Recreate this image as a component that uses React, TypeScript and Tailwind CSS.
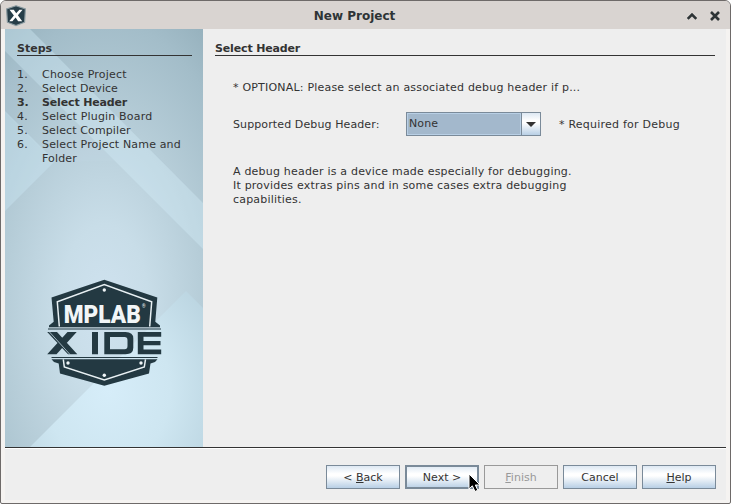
import React from "react";

const steps = [
  { lines: ["Choose Project"], look: "tracking-[0.22px]" },
  { lines: ["Select Device"], look: "tracking-[0.07px]" },
  { lines: ["Select Header"], look: "font-bold tracking-[-0.15px]" },
  { lines: ["Select Plugin Board"], look: "tracking-[0.18px]" },
  { lines: ["Select Compiler"], look: "tracking-[0.12px]" },
  { lines: ["Select Project Name and", "Folder"], look: "tracking-[0.16px]" },
];

function AppIcon() {
  return (
    <svg width="22" height="22" viewBox="0 0 22 22" className="mt-px block">
      <path d="M11 .8 20.400 4 19.600 17.200 11 20.600 2.400 17.200 1.600 4Z" fill="#263d48" stroke="#8b9ba1" strokeWidth="1.200" />
      <path d="M4.500 4.800H8.800L11.200 8.200 14.400 4.800H17.600L12.900 10.300 17.200 16.200H13.100L10.600 12.600 7.400 16.200H4.200L8.900 10.600Z" fill="#fff" />
    </svg>
  );
}

function Backdrop() {
  return (
    <svg width="198" height="418" viewBox="5 29 198 418" className="absolute inset-0">
      <defs>
        <radialGradient id="glow" gradientUnits="userSpaceOnUse" cx="0" cy="0" r="1" gradientTransform="translate(104 310) scale(180 340)">
          <stop offset="0" stopColor="#cfe2ef" />
          <stop offset=".25" stopColor="#c8dde8" />
          <stop offset=".55" stopColor="#b6cdd8" />
          <stop offset=".85" stopColor="#a3bdc9" />
          <stop offset="1" stopColor="#96b1bd" />
        </radialGradient>
        <radialGradient id="corner" gradientUnits="userSpaceOnUse" cx="0" cy="0" r="1" gradientTransform="translate(108 390) scale(125 150)">
          <stop offset="0" stopColor="#d6edf9" />
          <stop offset=".5" stopColor="#cee6f1" />
          <stop offset="1" stopColor="#b9d3df" />
        </radialGradient>
      </defs>
      <rect x="5" y="29" width="198" height="418" fill="url(#glow)" />
      <path d="M5 29H30L203 203V249L5 51Z" fill="#d6f0fc" fillOpacity=".35" />
      <path d="M5 51 115 161 54 162 5 113Z" fill="#d6f0fc" fillOpacity=".06" />
      <path d="M5 111 55 161 5 211Z" fill="#cdeaf6" fillOpacity=".38" />
      <path d="M30 447 186 291 203 308V447Z" fill="url(#corner)" />
    </svg>
  );
}

function Logo() {
  return (
    <svg width="120" height="110" viewBox="45 278 120 110" className="absolute left-[40px] top-[249px]">
      <g fill="#233942">
        <path d="M104.300 279.800 157.300 297.500 155.300 321.700 160 325.500V327H49V325.500L53.700 321.700 51.500 297.500Z" />
        <path d="M51.500 359.300H157.500L155 362 150.500 363.500 149 373.500 104.300 385.800 60 373.500 58.700 363.500 54 362Z" />
      </g>
      <path d="M59.300 326.500 57.300 301.700 104.300 284.500 151.700 301.700 149.700 326.500" fill="none" stroke="#e8f0f3" strokeWidth="1.500" />
      <path d="M63.300 359.300 64.300 367 104.300 380 144.300 367 145.500 359.300" fill="none" stroke="#e8f0f3" strokeWidth="1.500" />
      <g fill="#f0f5f7">
        <circle cx="104.300" cy="290" r="1.700" />
        <circle cx="68" cy="363" r="1.700" />
        <circle cx="141" cy="363" r="1.700" />
        <circle cx="104.300" cy="375.300" r="1.700" />
      </g>
      <path d="M49 327.500H160" stroke="#9fb1ba" strokeWidth="1" />
      <path d="M48 329H161M51.500 357.500H157.500" stroke="#233942" strokeWidth="1.200" />
      <path d="M67.500 332H76.700L56.500 354.300H47.200ZM47.200 332H57L77.300 354.300H68Z" fill="#233942" />
      <path d="M49.500 332 70 354.500" stroke="#c0d5e0" strokeWidth=".8" />
      <g fill="#233942" fillRule="evenodd">
        <path d="M92 332H98V354.300H92Z" />
        <path d="M104.300 332H125.500Q133.300 332 133.300 338.500V347.800Q133.300 354.300 125.500 354.300H104.300ZM110 337V349.300H124.500Q127.500 349.300 127.500 346V340.300Q127.500 337 124.500 337Z" />
        <path d="M137.800 332H161.200V336.800H143.500V341H160.500V345.300H143.500V349.500H161.200V354.300H137.800Z" />
      </g>
      <text x="63.800" y="322.700" textLength="77" lengthAdjust="spacingAndGlyphs" fontFamily="Roboto" fontWeight="900" fontSize="26.500" fill="#f2f6f7">MPLAB</text>
      <text x="142" y="307.500" fontFamily="Roboto" fontSize="4.500" fill="#f2f6f7">®</text>
    </svg>
  );
}

function Button({ className = "", children }: { className?: string; children: React.ReactNode }) {
  return (
    <button className={`h-6 w-[74px] shrink-0 border pt-px text-center ${className}`}>{children}</button>
  );
}

const shine = "border-[#7a8a99] bg-[linear-gradient(180deg,#dde8f3_0%,#ffffff_35%,#ffffff_45%,#b8cfe5_100%)]";

export default function App() {
  return (
    <div className="h-[504px] w-[731px] bg-white font-['DejaVu_Sans',sans-serif] text-[11px] leading-[14px] text-[#333333]">
      <div className="flex h-full flex-col overflow-hidden rounded-t-[6px] rounded-b-[2px] border border-[#6e6a69] bg-[#f5f3f1]">
        <header className="flex h-7 shrink-0 items-center bg-[#d9d4d1] pl-1">
          <AppIcon />
          <h1 className="flex-1 pr-1 pt-[2px] text-center text-[12px] font-bold text-[#2e3436]">New Project</h1>
          <svg width="36" height="12" viewBox="0 0 36 12" className="mr-2 mt-px" fill="none" stroke="#2e3436" strokeWidth="2.600">
            <path d="M1.700 8.800 6 4.500 10.300 8.800M25 2 33 10M33 2 25 10" />
          </svg>
        </header>

        <main className="mx-1 mb-[3px] flex min-h-0 flex-1 flex-col bg-[#eeeeee]">
          <div className="flex h-[418px] shrink-0">
            <aside className="relative w-[198px] shrink-0">
              <Backdrop />
              <div className="relative pl-3 pr-[11px] pt-[13px]">
                <h2 className="h-[14px] border-b border-[#333333] font-bold">Steps</h2>
                <ol className="mt-3">
                  {steps.map(({ lines, look }, i) => (
                    <li key={lines[0]} className={`flex whitespace-nowrap ${look}`}>
                      <span className="w-[25px] shrink-0">{i + 1}.</span>
                      <span>
                        {lines.map((line) => (
                          <span key={line} className="block">{line}</span>
                        ))}
                      </span>
                    </li>
                  ))}
                </ol>
              </div>
              <Logo />
            </aside>
            <section className="w-[512px] pl-3 pt-[13px]">
              <h2 className="h-[14px] border-b border-[#333333] font-bold tracking-[-0.15px]">Select Header</h2>
              <div className="pl-[18px] pt-[25px]">
                <p className="whitespace-nowrap tracking-[0.2px]">* OPTIONAL: Please select an associated debug header if p...</p>
                <div className="mt-[17px] flex h-6 items-center">
                  <span className="w-[173px] shrink-0 pt-0.5 tracking-[0.11px]">Supported Debug Header:</span>
                  <div className="flex h-6 w-[135px] border border-[#7a8a99]">
                    <div className="flex-1 border border-[#b8cfe5] bg-[#a3b8cc] pl-px pt-[3px] tracking-[0.1px]">None</div>
                    <div className="flex w-[19px] items-center justify-center border-l border-[#7a8a99] bg-[linear-gradient(180deg,#dde8f3,#ffffff_35%,#ffffff_45%,#b8cfe5)]">
                      <svg width="10" height="5" viewBox="0 0 10 5" className="mt-px"><path d="M0 0H10L5 5Z" fill="#333" /></svg>
                    </div>
                  </div>
                  <span className="ml-[18px] whitespace-nowrap pt-0.5 tracking-[0.23px]">* Required for Debug</span>
                </div>
                <p className="mt-[29px] whitespace-nowrap tracking-[0.2px]">
                  A debug header is a device made especially for debugging.<br />
                  It provides extras pins and in some cases extra debugging<br />
                  capabilities.
                </p>
              </div>
            </section>
          </div>
          <footer className="relative flex flex-1 justify-end gap-[5px] border-t border-[#333333] pr-[10px] pt-[17px] shadow-[inset_0_1px_0_#ffffff]">
            <Button className={shine}>&lt; <u>B</u>ack</Button>
            <Button className={shine + " shadow-[inset_0_0_0_1px_#7a8a99]"}>Next &gt;</Button>
            <Button className="border-[#999999] text-[#999999]"><u>F</u>inish</Button>
            <Button className={shine}>Cancel</Button>
            <Button className={shine}><u>H</u>elp</Button>
            <svg width="14" height="20" viewBox="0 0 14 20" className="absolute left-[463px] top-[25px]">
              <path d="M1 1V16L4.300 12.800 7 18.500 9.800 17.200 7.300 12H12Z" fill="#000" stroke="#fff" strokeWidth="1" />
            </svg>
          </footer>
        </main>
      </div>
    </div>
  );
}
